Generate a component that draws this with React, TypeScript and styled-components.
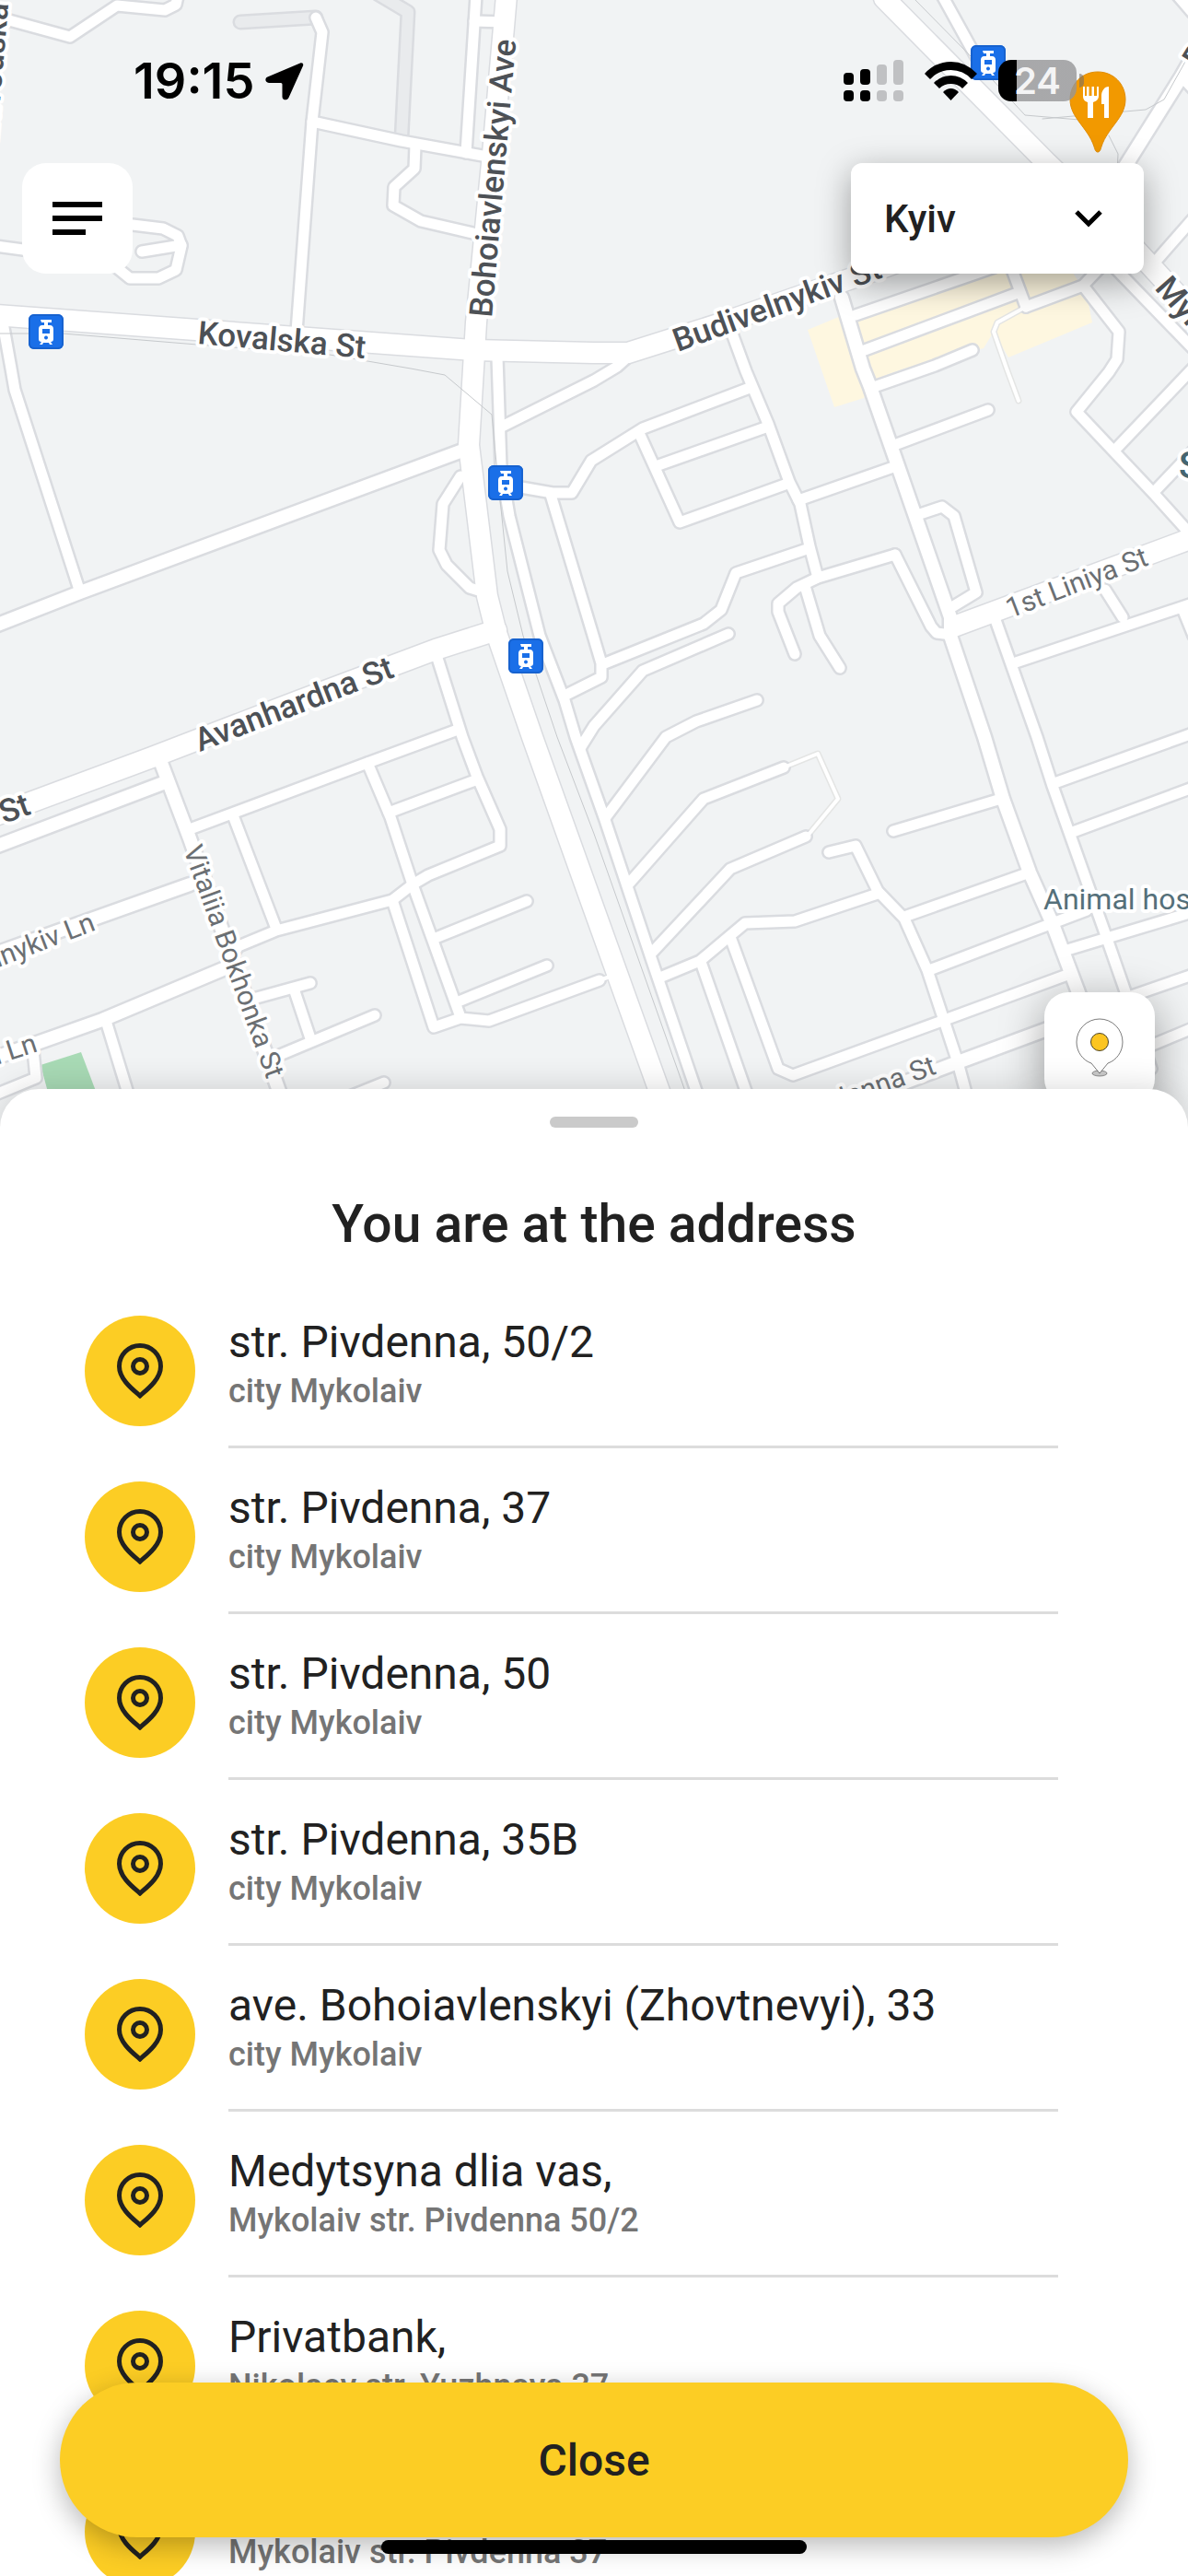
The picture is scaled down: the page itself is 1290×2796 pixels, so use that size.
import React from "react";
import styled, { createGlobalStyle } from "styled-components";

const ACCENT = "#fccd24";
const INK = "#212121";

const GlobalStyle = createGlobalStyle`
  *, *::before, *::after { box-sizing: border-box; }
  body { margin: 0; background: #fff; font-family: Roboto, "Liberation Sans", sans-serif; color: ${INK}; }
  button, select { font: inherit; color: inherit; border: 0; margin: 0; padding: 0; cursor: pointer; }
`;

const Screen = styled.main`
  position: relative;
  display: flex;
  flex-direction: column;
  height: 100vh;
  overflow: hidden;
`;

const Stage = styled.section`
  position: relative;
  flex: 1;
  min-height: 0;
  display: flex;
  flex-direction: column;
`;

const MapCanvas = styled.svg`
  position: absolute;
  top: 0;
  left: 0;
  width: 100%;
  height: 1240px;
  background: #f1f3f4;
`;

const StatusBar = styled.header`
  position: relative;
  display: flex;
  align-items: center;
  justify-content: space-between;
  height: 177px;
  padding: 0 113px 2px 145px;
`;

const StatusGroup = styled.div<{ $gap: number }>`
  display: flex;
  align-items: center;
  gap: ${(p) => p.$gap}px;
`;

const Clock = styled.time`
  font: 600 54px/64px Inter, "Liberation Sans", sans-serif;
  color: #000;
`;

const Battery = styled.div`
  display: flex;
  align-items: center;
  gap: 3px;
`;

const BatteryBody = styled.div<{ $level: number }>`
  width: 85px;
  height: 45px;
  border-radius: 14px;
  background: linear-gradient(
    to right,
    #000 ${(p) => p.$level}%,
    rgba(150, 150, 152, 0.8) ${(p) => p.$level}%
  );
  color: #f4f4f5;
  font: 600 40px/45px Inter, "Liberation Sans", sans-serif;
  text-align: center;
`;

const BatteryCap = styled.div`
  width: 5px;
  height: 15px;
  border-radius: 0 5px 5px 0;
  background: rgba(120, 110, 100, 0.6);
`;

const TopBar = styled.nav`
  position: relative;
  display: flex;
  justify-content: space-between;
  padding: 0 48px 0 24px;
`;

const SquareButton = styled.button<{ $raised?: boolean }>`
  display: grid;
  place-items: center;
  width: 120px;
  height: 120px;
  border-radius: 26px;
  background: #fff;
  box-shadow: ${(p) => (p.$raised ? "0 12px 48px rgba(0, 0, 0, 0.38)" : "none")};
`;

const CityPicker = styled.label`
  display: grid;
  align-items: center;
  width: 318px;
  height: 120px;
  border-radius: 12px;
  background: #fff;
  box-shadow: 0 10px 36px rgba(0, 0, 0, 0.36);

  & > * {
    grid-area: 1 / 1;
  }

  & > svg {
    justify-self: end;
    margin-right: 42px;
    pointer-events: none;
  }
`;

const CitySelect = styled.select`
  appearance: none;
  width: 100%;
  height: 100%;
  padding: 0 84px 0 36px;
  border-radius: 12px;
  background: transparent;
  font-size: 42px;
  font-weight: 500;
`;

const LocateRow = styled.div`
  position: relative;
  display: flex;
  justify-content: flex-end;
  margin: auto 36px -15px 0;
`;

const Sheet = styled.section`
  position: relative;
  display: flex;
  flex-direction: column;
  height: 1614px;
  max-height: 80vh;
  padding-top: 30px;
  border-radius: 42px 42px 0 0;
  background: #fff;
  box-shadow: 0 0 36px rgba(0, 0, 0, 0.16);
  overflow: hidden;
`;

const Handle = styled.div`
  align-self: center;
  flex: none;
  width: 96px;
  height: 12px;
  border-radius: 6px;
  background: #cacaca;
`;

const SheetTitle = styled.h1`
  flex: none;
  margin: 73px 0 31px;
  text-align: center;
  font-size: 57px;
  line-height: 64px;
  font-weight: 500;
`;

const AddressList = styled.ul`
  flex: 1;
  min-height: 0;
  margin: 0;
  padding: 0 141px 0 92px;
  list-style: none;
  overflow: hidden;
`;

const AddressButton = styled.button`
  display: flex;
  gap: 36px;
  width: 100%;
  height: 180px;
  background: none;
  text-align: left;
`;

const PinBadge = styled.span`
  flex: none;
  display: grid;
  place-items: center;
  width: 120px;
  height: 120px;
  margin-top: 36px;
  border-radius: 50%;
  background: ${ACCENT};
`;

const AddressText = styled.span`
  flex: 1;
  display: flex;
  flex-direction: column;
  height: 180px;
  padding-top: 37px;
  border-bottom: 3px solid #dcdcdc;
`;

const Street = styled.span`
  font-size: 48px;
  line-height: 56px;
`;

const Locality = styled.span`
  font-size: 36px;
  line-height: 50px;
  font-weight: 500;
  color: #757575;
`;

const CloseButton = styled.button`
  position: absolute;
  left: 65px;
  right: 65px;
  bottom: 42px;
  height: 168px;
  border-radius: 84px;
  background: ${ACCENT};
  box-shadow: 0 9px 30px rgba(0, 0, 0, 0.28);
  font-size: 48px;
  font-weight: 500;
`;

const HomeIndicator = styled.div`
  position: absolute;
  left: 50%;
  bottom: 24px;
  width: 462px;
  height: 15px;
  margin-left: -231px;
  border-radius: 8px;
  background: #000;
`;

/* ---------- map data ---------- */

const streets = [
  "M-10 16 L10 22 L76 40 L127 6 L179 11 L191 5 L193 -4",
  "M343 19 L350 35 L339 132 L322 360",
  "M339 132 L436 153 L535 171",
  "M451 158 L450 183 L428 203 L427 223 L457 240 L522 255",
  "M517 -5 L506 166",
  "M515 23 L548 24",
  "M120 243 L144 244 L177 248 L193 256 L197 267 L191 293 L172 302 L141 302 L120 285",
  "M154 273 L197 266",
  "M-5 267 L40 273",
  "M3 350 L12 400 L16 423 L87 643",
  "M1023 -5 L1060 62",
  "M1276 -8 L1295 14",
  "M1283 83 L1295 96",
  "M1252 287 L1295 238",
  "M1205 285 L1295 378",
  "M929 342 L1080 290",
  "M939 380 L1105 318",
  "M1098 290 L1114 333",
  "M1114 333 L1176 310 L1195 290",
  "M1176 310 L1215 360 L1213 390 L1204 404 L1169 447 L1254 537 L1290 577",
  "M949 420 L1015 397 L1056 380",
  "M795 362 L810 403 L834 460 L857 523 L869 547 L879 593 L888 627",
  "M500 517 L481 547 L477 597 L485 613 L510 638 L526 643",
  "M540 388 L544 507 L553 560 L586 690 L613 760 L625 800 L657 890 L707 1040 L758 1190",
  "M545 463 L645 413 L670 398 L690 380",
  "M560 528 L600 535 L621 535 L642 500 L698 465 L814 421",
  "M598 537 L645 693 L653 720 L653 735 L613 755",
  "M473 708 L502 800 L518 843 L543 900 L543 918 L465 950 L448 960 L426 977 L300 1010 L259 1027 L242 1052",
  "M497 792 L399 828 L206 900",
  "M253 885 L300 1008",
  "M399 828 L424 887 L448 960 L500 1104",
  "M422 882 L516 847",
  "M473 1018 L572 978",
  "M498 1087 L594 1048",
  "M426 977 L471 1115 L500 1105 L531 1108 L651 1064",
  "M275 1084 L337 1067",
  "M319 1073 L337 1127",
  "M304 1145 L407 1102",
  "M370 1194 L417 1175",
  "M115 1108 L140 1190",
  "M36 1140 L39 1170 L-5 1188",
  "M694 470 L738 567 L855 525",
  "M715 505 L834 463",
  "M867 543 L970 507",
  "M974 482 L1073 445",
  "M999 558 L1023 550 L1036 560 L1060 643 L1032 660",
  "M879 595 L799 622 L783 662 L764 677 L657 720",
  "M972 602 L888 627 L865 638 L845 655 L845 664 L863 710",
  "M874 636 L890 690 L912 725",
  "M972 602 L1011 680 L1017 687 L1034 689",
  "M1081 673 L1126 800 L1143 853 L1200 1013 L1225 1085 L1250 1160",
  "M1200 640 L1219 670",
  "M1100 720 L1295 655",
  "M1285 663 L1296 690",
  "M791 688 L698 728 L645 788 L630 812",
  "M822 760 L756 783 L723 800 L657 888",
  "M851 833 L764 867 L682 960",
  "M875 908 L793 943 L707 1035",
  "M900 925 L929 918 L953 967 L982 997 L1007 1053 L1040 1153 L1050 1190",
  "M953 970 L863 1000 L809 1002 L760 1043 L719 1060",
  "M793 1017 L845 1160 L861 1167 L1023 1108 L1159 1058",
  "M762 1047 L812 1190",
  "M970 902 L1087 867",
  "M982 995 L1118 947",
  "M1009 1053 L1143 1002 L1180 988",
  "M1159 1031 L1295 990",
  "M1145 850 L1295 796",
  "M1165 903 L1295 855",
  "M1220 1084 L1295 1058",
  "M1230 1143 L1295 1116",
  "M1211 488 L1295 400",
  "M1254 533 L1295 490",
];

const mediumStreets = [
  "M-5 679 L87 643 L505 488",
  "M175 828 L206 910 L305 1190",
  "M-5 919 L177 850",
  "M-5 1035 L206 960",
  "M242 1052 L111 1107 L-5 1148",
  "M914 323 L937 400 L945 420 L974 503 L1032 670 L1032 690 L1069 800 L1089 867 L1118 947 L1143 1003 L1172 1080 L1200 1160",
  "M1221 182 L1283 83 L1295 62",
  "M890 1210 L1040 1153 L1140 1116",
];

const avenues = [
  "M550 -5 L535 167 L517 350 L514 400 L509 483 L529 647 L539 687 L578 800 L645 987 L718 1190",
  "M-5 342 L514 380 L645 383 L682 383 L780 352 L960 290 L1140 225",
  "M960 -2 L1137 177 L1225 262 L1295 338",
  "M539 684 L473 705 L321 762 L165 822 L-5 885",
  "M1036 680 L1295 584",
];

const footpaths = [
  "M1114 333 L1083 350 L1079 360 L1093 400 L1106 435",
  "M851 833 L888 818 L910 867 L877 907",
  "M651 1064 L668 1058",
];

const serviceLanes = ["M261 24 L343 19", "M411 -6 L443 13 L436 150"];

const rails = [
  "M-5 362 L68 362 L214 374 L358 385 L446 400 L483 407 L534 450 L539 503 L551 620 L568 690 L605 800 L645 905 L746 1190",
  "M990 -4 L1056 63 L1113 125 L1172 130",
  "M1132 129 L1244 119 L1264 108 L1292 58",
  "M1204 147 L1214 167 L1213 190",
];

type Tone = "major" | "minor" | "place" | "district";

type LabelSpec = {
  text: string;
  x: number;
  y: number;
  angle: number;
  tone: Tone;
  end?: boolean;
};

const labels: LabelSpec[] = [
  { text: "Kovalska St", x: 214, y: 373, angle: 5, tone: "major" },
  { text: "Bohoiavlenskyi Ave", x: 534, y: 345, angle: -85, tone: "major" },
  { text: "Budivelnykiv St", x: 736, y: 382, angle: -20, tone: "major" },
  { text: "Avanhardna St", x: 217, y: 816, angle: -21, tone: "major" },
  { text: "Avanhardna St", x: 35, y: 883, angle: -20, tone: "major", end: true },
  { text: "Mykolaivska St", x: 1253, y: 313, angle: 49, tone: "major" },
  { text: "Bila St", x: 1303, y: 76, angle: -58, tone: "major" },
  { text: "Zavodska St", x: -4, y: 155, angle: -85, tone: "major" },
  { text: "Vitaliia Bokhonka St", x: 199, y: 922, angle: 70, tone: "minor" },
  { text: "Budivelnykiv Ln", x: 105, y: 1009, angle: -21, tone: "minor", end: true },
  { text: "Pivdennyi Ln", x: 42, y: 1141, angle: -18, tone: "minor", end: true },
  { text: "1st Liniya St", x: 1097, y: 671, angle: -21, tone: "minor" },
  { text: "Pivdenna St", x: 1018, y: 1165, angle: -20, tone: "minor", end: true },
  { text: "Animal hospital", x: 1133, y: 987, angle: 0, tone: "place" },
  { text: "School", x: 1280, y: 519, angle: 0, tone: "district" },
];

const tones: Record<Tone, { color: string; size: number; weight: number }> = {
  major: { color: "#4d5156", size: 35, weight: 500 },
  minor: { color: "#6b6f73", size: 30, weight: 400 },
  place: { color: "#55707a", size: 32, weight: 400 },
  district: { color: "#456570", size: 40, weight: 500 },
};

const MapLabel = styled.text<{ $tone: Tone }>`
  font-family: Roboto, "Liberation Sans", sans-serif;
  font-size: ${(p) => tones[p.$tone].size}px;
  font-weight: ${(p) => tones[p.$tone].weight};
  fill: ${(p) => tones[p.$tone].color};
  stroke: #fff;
  stroke-width: 8px;
  stroke-linejoin: round;
  paint-order: stroke;
`;

const Lines = ({ paths, color, width }: { paths: string[]; color: string; width: number }) => (
  <g fill="none" stroke={color} strokeWidth={width} strokeLinecap="round" strokeLinejoin="round">
    {paths.map((d) => (
      <path key={d} d={d} />
    ))}
  </g>
);

const TramStop = ({ x, y }: { x: number; y: number }) => (
  <g transform={`translate(${x} ${y})`}>
    <rect width="38" height="38" rx="6" fill="#1a6fe8" />
    <rect x="1" y="1" width="36" height="36" rx="5" fill="none" stroke="#1762cf" strokeWidth="2" />
    <path
      fill="#fff"
      fillRule="evenodd"
      d="M13 6h12v3h-4v3h2c3 0 4 2 4 4v11c0 2-1 3-3 3l2 3h-3l-1-2h-6l-1 2h-3l2-3c-2 0-3-1-3-3V16c0-2 1-4 4-4h2V9h-3zM15 16v5h8v-5zM19 23.500a2 2 0 1 0 .01 0z"
    />
  </g>
);

const CityMap = () => (
  <MapCanvas viewBox="0 0 1290 1240" preserveAspectRatio="xMidYMin slice" role="img" aria-label="Map">
    <path d="M44 1156 L88 1142 L110 1200 L56 1200Z" fill="#a8dab5" />
    <path
      d="M877 358 L930 336 L1060 288 L1160 288 L1180 320 L1186 350 L1095 388 L1079 360 L1068 378 L982 400 L951 411 L938 432 L906 442Z"
      fill="#fef7e0"
    />
    <Lines paths={footpaths} color="#e4e5e4" width={7} />
    <Lines paths={serviceLanes} color="#dadce0" width={17} />
    <Lines paths={serviceLanes} color="#e9ebed" width={12} />
    <Lines paths={streets} color="#dadce0" width={16} />
    <Lines paths={mediumStreets} color="#dadce0" width={19} />
    <Lines paths={avenues} color="#dadce0" width={25} />
    <Lines paths={footpaths} color="#fff" width={4} />
    <Lines paths={streets} color="#fff" width={11} />
    <Lines paths={mediumStreets} color="#fff" width={14} />
    <Lines paths={avenues} color="#fff" width={22} />
    <Lines paths={rails} color="#c6c9cc" width={1} />
    {labels.map((l) => (
      <MapLabel
        key={l.text + l.x}
        $tone={l.tone}
        textAnchor={l.end ? "end" : "start"}
        transform={`translate(${l.x} ${l.y}) rotate(${l.angle})`}
      >
        {l.text}
      </MapLabel>
    ))}
    <TramStop x={31} y={341} />
    <TramStop x={530} y={505} />
    <TramStop x={552} y={693} />
    <TramStop x={1054} y={49} />
    <path
      d="M1192 78c17 0 30 13 30 30 0 20-19 30-26 51-1 4-2 6-4 6s-3-2-4-6c-7-21-26-31-26-51 0-17 13-30 30-30z"
      fill="#f29900"
      stroke="#e08c05"
      strokeWidth="1"
    />
    <path
      d="M1176 94v10c0 4 2 6 5 7v17h6v-17c3-1 6-3 6-7V94h-2v10h-3V94h-2.500v10h-3V94h-2.500v10h-2V94zM1204 94c-5 0-8 5-8 10v9h3v15h5z"
      fill="#fff"
    />
  </MapCanvas>
);

/* ---------- icons ---------- */

const LocationArrow = () => (
  <svg width="42" height="42" viewBox="0 0 42 42" aria-hidden="true">
    <path
      d="M38 1.500C40 .5 42 2 41 4.500L25.500 39C24 42.500 18.500 42 18.500 38V24.500Q18.500 23 17 23H4C0 23 -1 18 2.500 16.500Z"
      fill="#000"
    />
  </svg>
);

const CellSignal = () => (
  <svg width="65" height="45" viewBox="0 0 65 45" aria-hidden="true">
    <rect x="0" y="14" width="11" height="13" rx="4" />
    <rect x="18" y="10" width="11" height="17" rx="4" />
    <rect x="0" y="33" width="11" height="12" rx="4" />
    <rect x="18" y="33" width="11" height="12" rx="4" />
    <g fill="#c0c1c3">
      <rect x="36" y="5" width="11" height="22" rx="4" />
      <rect x="54" y="0" width="11" height="27" rx="4" />
      <rect x="36" y="33" width="11" height="12" rx="4" />
      <rect x="54" y="33" width="11" height="12" rx="4" />
    </g>
  </svg>
);

const WifiIcon = () => (
  <svg width="57" height="42" viewBox="0 0 57 42" aria-hidden="true">
    <path d="M0 13Q12 0 28.500 0T57 13L51 19Q42 9 28.500 9T6 19Z" />
    <path d="M10 23Q18 15 28.500 15T47 23L41 29Q36 24 28.500 24T16 29Z" />
    <path d="M20 33Q24 29 28.500 29T37 33L28.500 42Z" />
  </svg>
);

const MenuIcon = () => (
  <svg width="54" height="36" viewBox="0 0 54 36" aria-hidden="true">
    <path d="M0 0h54v6H0zM0 15h54v6H0zM0 30h36v6H0z" />
  </svg>
);

const ChevronIcon = () => (
  <svg width="36" height="24" viewBox="0 0 36 24" aria-hidden="true">
    <path d="M5 5L18 18L31 5" fill="none" stroke="#000" strokeWidth="5" />
  </svg>
);

const MyPlaceIcon = () => (
  <svg width="52" height="64" viewBox="0 0 52 64" aria-hidden="true">
    <ellipse cx="26" cy="60" rx="8" ry="3" fill="#c9c9c9" stroke="#555" strokeWidth="0.600" />
    <path
      d="M26 60L17 49C8 46 1 37 1 26a25 25 0 0 1 50 0c0 11-7 20-16 23Z"
      fill="#fff"
      stroke="#444"
      strokeWidth="0.700"
    />
    <circle cx="26" cy="26" r="9.500" fill="#fcc521" stroke="#4d4425" strokeWidth="1" />
  </svg>
);

const PinIcon = () => (
  <svg width="50" height="60" viewBox="0 0 50 60" fill="none" stroke={INK} strokeWidth="5" aria-hidden="true">
    <path d="M25 57C17 50 2.500 39 2.500 25a22.500 22.500 0 0 1 45 0C47.500 39 33 50 25 57Z" />
    <circle cx="25" cy="25" r="7.500" />
  </svg>
);

const addresses = [
  { street: "str. Pivdenna, 50/2", locality: "city Mykolaiv" },
  { street: "str. Pivdenna, 37", locality: "city Mykolaiv" },
  { street: "str. Pivdenna, 50", locality: "city Mykolaiv" },
  { street: "str. Pivdenna, 35B", locality: "city Mykolaiv" },
  { street: "ave. Bohoiavlenskyi (Zhovtnevyi), 33", locality: "city Mykolaiv" },
  { street: "Medytsyna dlia vas,", locality: "Mykolaiv str. Pivdenna 50/2" },
  { street: "Privatbank,", locality: "Nikolaev str. Yuzhnaya 37" },
  { street: "Apteka,", locality: "Mykolaiv str. Pivdenna 37" },
];

export default function App() {
  return (
    <>
      <GlobalStyle />
      <Screen>
        <Stage>
          <CityMap />
          <StatusBar>
            <StatusGroup $gap={12}>
              <Clock>19:15</Clock>
              <LocationArrow />
            </StatusGroup>
            <StatusGroup $gap={23}>
              <CellSignal />
              <WifiIcon />
              <Battery>
                <BatteryBody $level={24}>24</BatteryBody>
                <BatteryCap />
              </Battery>
            </StatusGroup>
          </StatusBar>
          <TopBar>
            <SquareButton aria-label="Menu">
              <MenuIcon />
            </SquareButton>
            <CityPicker>
              <CitySelect aria-label="City" defaultValue="Kyiv">
                <option>Kyiv</option>
                <option>Mykolaiv</option>
              </CitySelect>
              <ChevronIcon />
            </CityPicker>
          </TopBar>
          <LocateRow>
            <SquareButton $raised aria-label="My location">
              <MyPlaceIcon />
            </SquareButton>
          </LocateRow>
        </Stage>
        <Sheet>
          <Handle />
          <SheetTitle>You are at the address</SheetTitle>
          <AddressList>
            {addresses.map((a) => (
              <li key={a.street}>
                <AddressButton>
                  <PinBadge>
                    <PinIcon />
                  </PinBadge>
                  <AddressText>
                    <Street>{a.street}</Street>
                    <Locality>{a.locality}</Locality>
                  </AddressText>
                </AddressButton>
              </li>
            ))}
          </AddressList>
        </Sheet>
        <CloseButton>Close</CloseButton>
        <HomeIndicator />
      </Screen>
    </>
  );
}
